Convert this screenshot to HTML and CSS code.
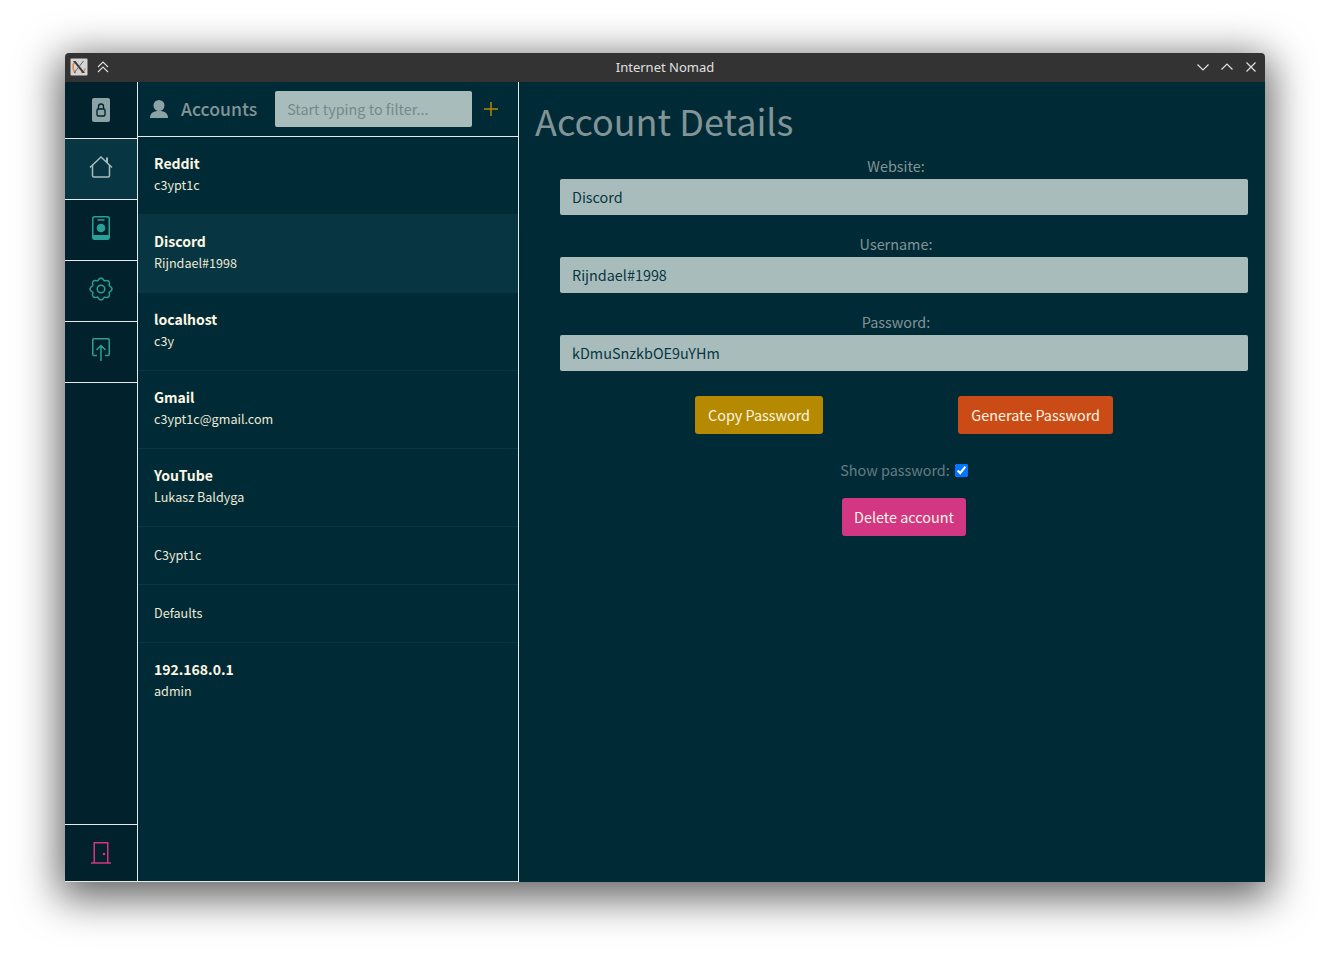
FILE: index.html
```html
<!DOCTYPE html>
<html>
<head>
    <title>Internet Nomad</title>
    <link rel="stylesheet" href="styles.css">
</head>
<body>
    <div class="window">
        <div class="titlebar">
            <div class="title-left">
                <svg class="x-icon" width="18" height="18" viewBox="0 0 18 18">
                    <rect x="0.5" y="0.5" width="17" height="17" rx="1" fill="#d4d4d4"/>
                    <path d="M6 3.500C2 5 2 12 6 15" fill="none" stroke="#dc8a52" stroke-width="1.600"/>
                    <path d="M11 15c3-1 4-3 4-5" fill="none" stroke="#dc8a52" stroke-width="1.300"/>
                    <path d="M3 3h2.500l9.500 12h-2.500z" fill="#3a3a3a"/>
                    <path d="M13.500 3L4 15" fill="none" stroke="#555" stroke-width="0.900"/>
                </svg>
                <svg class="shade" width="12" height="12" viewBox="0 0 12 12" fill="none" stroke="#e0e0e0" stroke-width="1.100">
                    <path d="M1 6l5-5 5 5M1 11l5-5 5 5"/>
                </svg>
            </div>
            <div class="title-text">Internet Nomad</div>
            <div class="title-right">
                <svg width="12" height="12" viewBox="0 0 12 12" fill="none" stroke="#e0e0e0" stroke-width="1.200"><path d="M0.5 3.500L6 9l5.500-5.500"/></svg>
                <svg width="12" height="12" viewBox="0 0 12 12" fill="none" stroke="#e0e0e0" stroke-width="1.200"><path d="M0.5 8.500L6 3l5.500 5.500"/></svg>
                <svg width="12" height="12" viewBox="0 0 12 12" fill="none" stroke="#e0e0e0" stroke-width="1.200"><path d="M1.500 1.500l9 9M10.500 1.500l-9 9"/></svg>
            </div>
        </div>
        <div class="app">
            <nav class="sidebar">
                <a class="nav-item nav-lock">
                    <svg width="18" height="24" viewBox="0 0 18 24">
                        <rect width="18" height="24" rx="2" fill="#8ba3a5"/>
                        <rect x="5" y="11" width="8" height="7" rx="1.500" fill="none" stroke="#02242e" stroke-width="1.400"/>
                        <path d="M6.500 11V8.500a2.500 2.500 0 0 1 5 0V11" fill="none" stroke="#02242e" stroke-width="1.400"/>
                    </svg>
                </a>
                <a class="nav-item nav-home active">
                    <svg width="24" height="22" viewBox="0 0 24 22" fill="none" stroke="#a9bcbc" stroke-width="1.500">
                        <path d="M1 11.500L12 1l11 10.500"/>
                        <path d="M3.500 9v10.500A1.500 1.500 0 0 0 5 21h14a1.500 1.500 0 0 0 1.500-1.500V9"/>
                        <path d="M18 1.500v5" stroke-width="2"/>
                    </svg>
                </a>
                <a class="nav-item">
                    <svg width="18" height="24" viewBox="0 0 18 24">
                        <rect x="0.750" y="0.750" width="16.500" height="22.500" rx="2" fill="none" stroke="#2aa198" stroke-width="1.500"/>
                        <path d="M5.500 4h7" stroke="#2aa198" stroke-width="1.300"/>
                        <circle cx="9" cy="12" r="4.300" fill="#2aa198"/>
                        <path d="M1 19h16v3a1 1 0 0 1-1 1H2a1 1 0 0 1-1-1z" fill="#2aa198"/>
                    </svg>
                </a>
                <a class="nav-item">
                    <svg width="24" height="24" viewBox="0 0 24 24" fill="none" stroke="#2aa198" stroke-width="1.500">
                        <circle cx="12" cy="12" r="3.800"/>
                        <path d="M20.130 8.630Q26 12 20.130 15.370Q21.900 21.900 15.370 20.130Q12 26 8.630 20.130Q2.100 21.900 3.870 15.370Q-2 12 3.870 8.630Q2.100 2.100 8.630 3.870Q12 -2 15.370 3.870Q21.900 2.100 20.130 8.630Z" stroke-linejoin="round"/>
                    </svg>
                </a>
                <a class="nav-item">
                    <svg width="18" height="24" viewBox="0 0 18 24" fill="none" stroke="#2aa198" stroke-width="1.500">
                        <path d="M5 17.500H2a1.250 1.250 0 0 1-1.250-1.250V2A1.250 1.250 0 0 1 2 .75h14A1.250 1.250 0 0 1 17.250 2v14.250A1.250 1.250 0 0 1 16 17.500h-3"/>
                        <path d="M9 23V7.500M4.500 12L9 7.500l4.500 4.500"/>
                    </svg>
                </a>
                <div class="nav-space"></div>
                <a class="nav-item nav-door">
                    <svg width="20" height="22" viewBox="0 0 20 22" fill="none" stroke="#d33682" stroke-width="1.500">
                        <path d="M3.250 21V.75h13.500V21"/>
                        <path d="M0 21h20"/>
                        <circle cx="13" cy="12" r="1.300" fill="#d33682" stroke="none"/>
                    </svg>
                </a>
            </nav>
            <section class="accounts">
                <header class="accounts-head">
                    <svg class="user-icon" width="18" height="18" viewBox="0 0 18 18" fill="#8ba3a5">
                        <circle cx="9" cy="5.500" r="5.500"/>
                        <path d="M0 18c0-4.500 3-7 9-7s9 2.500 9 7z"/>
                    </svg>
                    <span class="accounts-title">Accounts</span>
                    <input class="filter" type="text" placeholder="Start typing to filter...">
                    <span class="add">
                        <svg width="14" height="14" viewBox="0 0 14 14" stroke="#b58900" stroke-width="1.500"><path d="M7 0v14M0 7h14"/></svg>
                    </span>
                </header>
                <ul class="account-list">
                    <li class="account"><b>Reddit</b><span>c3ypt1c</span></li>
                    <li class="account selected"><b>Discord</b><span>Rijndael#1998</span></li>
                    <li class="account"><b>localhost</b><span>c3y</span></li>
                    <li class="account"><b>Gmail</b><span>c3ypt1c@gmail.com</span></li>
                    <li class="account"><b>YouTube</b><span>Lukasz Baldyga</span></li>
                    <li class="account short"><span>C3ypt1c</span></li>
                    <li class="account short"><span>Defaults</span></li>
                    <li class="account"><b>192.168.0.1</b><span>admin</span></li>
                </ul>
            </section>
            <main class="details">
                <h1>Account Details</h1>
                <form class="details-form">
                    <label>Website:</label>
                    <input type="text" value="Discord">
                    <label>Username:</label>
                    <input type="text" value="Rijndael#1998">
                    <label>Password:</label>
                    <input type="text" value="kDmuSnzkbOE9uYHm">
                    <div class="btn-row">
                        <button type="button" class="btn yellow">Copy Password</button>
                        <button type="button" class="btn orange">Generate Password</button>
                    </div>
                    <div class="show-row">
                        <span>Show password:</span>
                        <input type="checkbox" checked>
                    </div>
                    <div class="delete-row">
                        <button type="button" class="btn pink">Delete account</button>
                    </div>
                </form>
            </main>
        </div>
    </div>
</body>
</html>
```

FILE: styles.css
```css
html, body {
    margin: 0;
    height: 100%;
    background: #fff;
    overflow: hidden;
}
body {
    font-family: "Noto Sans CJK SC", "Source Sans Pro", sans-serif;
    padding: 53px 65px 0;
    box-sizing: border-box;
}
.window {
    width: 1200px;
    height: 829px;
    border-radius: 4px 4px 0 0;
    box-shadow: 0 10px 42px 6px rgba(0, 0, 0, 0.62);
    display: flex;
    flex-direction: column;
    overflow: hidden;
}
.titlebar {
    height: 28px;
    padding-bottom: 1px;
    flex: none;
    background: #333;
    display: flex;
    align-items: center;
    position: relative;
}
.title-left {
    display: flex;
    align-items: center;
    gap: 9px;
    padding-left: 5px;
}
.title-text {
    position: absolute;
    left: 0;
    right: 0;
    top: 5px;
    line-height: 18px;
    text-align: center;
    font-family: "Noto Sans", sans-serif;
    font-size: 13px;
    color: #e0e0e0;
}
.title-right {
    margin-left: auto;
    display: flex;
    gap: 12px;
    padding-right: 8px;
}
.app {
    flex: 1;
    display: flex;
    min-height: 0;
    background: #002b36;
}
.sidebar {
    width: 72px;
    flex: none;
    background: #01222c;
    border-right: 1px solid #e8eaea;
    border-bottom: 1px solid #e8eaea;
    display: flex;
    flex-direction: column;
}
.nav-item {
    height: 56px;
    padding-bottom: 4px;
    flex: none;
    display: flex;
    align-items: center;
    justify-content: center;
    border-bottom: 1px solid #e8eaea;
}
.nav-lock {
    height: 56px;
    padding-bottom: 0;
}
.nav-home.active {
    background: #073642;
}
.nav-space {
    flex: 1;
    border-bottom: 1px solid #e8eaea;
}
.nav-door {
    height: 56px;
    padding-bottom: 0;
    border-bottom: none;
}
.accounts {
    width: 380px;
    flex: none;
    border-right: 1px solid #e8eaea;
    border-bottom: 1px solid #e8eaea;
    display: flex;
    flex-direction: column;
}
.accounts-head {
    height: 54px;
    flex: none;
    border-bottom: 1px solid #e8eaea;
    display: flex;
    align-items: center;
    padding-left: 12px;
}
.accounts-title {
    margin-left: 13px;
    font-size: 17.6px;
    line-height: 26px;
    font-weight: 500;
    color: #839496;
}
.filter {
    margin-left: 18px;
    width: 197px;
    height: 36px;
    box-sizing: border-box;
    border: none;
    border-radius: 2px;
    padding: 0 12px 2px;
    background: #a9bcbc;
    font-family: inherit;
    font-size: 14.4px;
    color: #073642;
}
.filter::placeholder {
    color: #74898c;
}
.add {
    margin-left: 12px;
    display: flex;
}
.account-list {
    list-style: none;
    margin: 0;
    padding: 0;
}
.account {
    height: 78px;
    box-sizing: border-box;
    display: flex;
    flex-direction: column;
    justify-content: center;
    padding: 0 16px 3px;
    border-bottom: 1px solid #073642;
    color: #eee8d5;
}
.account:first-child {
    height: 77px;
    border-bottom: none;
}
.account:last-child {
    border-bottom: none;
    padding-bottom: 4px;
}
.account b {
    font-size: 14px;
    line-height: 22px;
    color: #fdf6e3;
}
.account span {
    font-size: 12.6px;
    line-height: 22px;
}
.account.selected {
    background: #073642;
    height: 79px;
    border-bottom: none;
}
.account.short {
    height: 58px;
    padding-bottom: 2px;
}
.details {
    flex: 1;
    padding: 0 17px 0 16px;
}
.details h1 {
    margin: 14px 0 0;
    font-size: 36px;
    line-height: 48px;
    font-weight: 400;
    color: #839496;
}
.details-form {
    margin-left: 25px;
    display: flex;
    flex-direction: column;
    margin-top: 13px;
}
.details-form label {
    text-align: center;
    font-size: 14.4px;
    line-height: 18px;
    color: #839496;
    padding-right: 16px;
    margin-bottom: 4px;
}
.details-form input[type="text"] {
    height: 36px;
    box-sizing: border-box;
    border: none;
    border-radius: 2px;
    padding: 0 12px 2px;
    margin-bottom: 20px;
    background: #a9bcbc;
    font-family: inherit;
    font-size: 14.4px;
    color: #073642;
}
.btn {
    height: 38px;
    box-sizing: border-box;
    border: none;
    border-radius: 3px;
    padding: 0 13px 2px;
    font-family: inherit;
    font-size: 14.4px;
    color: #fdf6e3;
}
.yellow {
    background: #b58900;
}
.orange {
    background: #cb4b16;
}
.pink {
    background: #d33682;
    width: 124px;
    padding: 0 0 2px;
}
.btn-row {
    display: flex;
    justify-content: space-between;
    padding: 5px 135px 0;
}
.show-row {
    display: flex;
    align-items: center;
    justify-content: center;
    margin-top: 26px;
    font-size: 14.4px;
    line-height: 20px;
    color: #657b83;
    gap: 5px;
}
.show-row input {
    margin: 0;
    width: 13px;
    height: 13px;
}
.delete-row {
    display: flex;
    justify-content: center;
    margin-top: 18px;
}
```
